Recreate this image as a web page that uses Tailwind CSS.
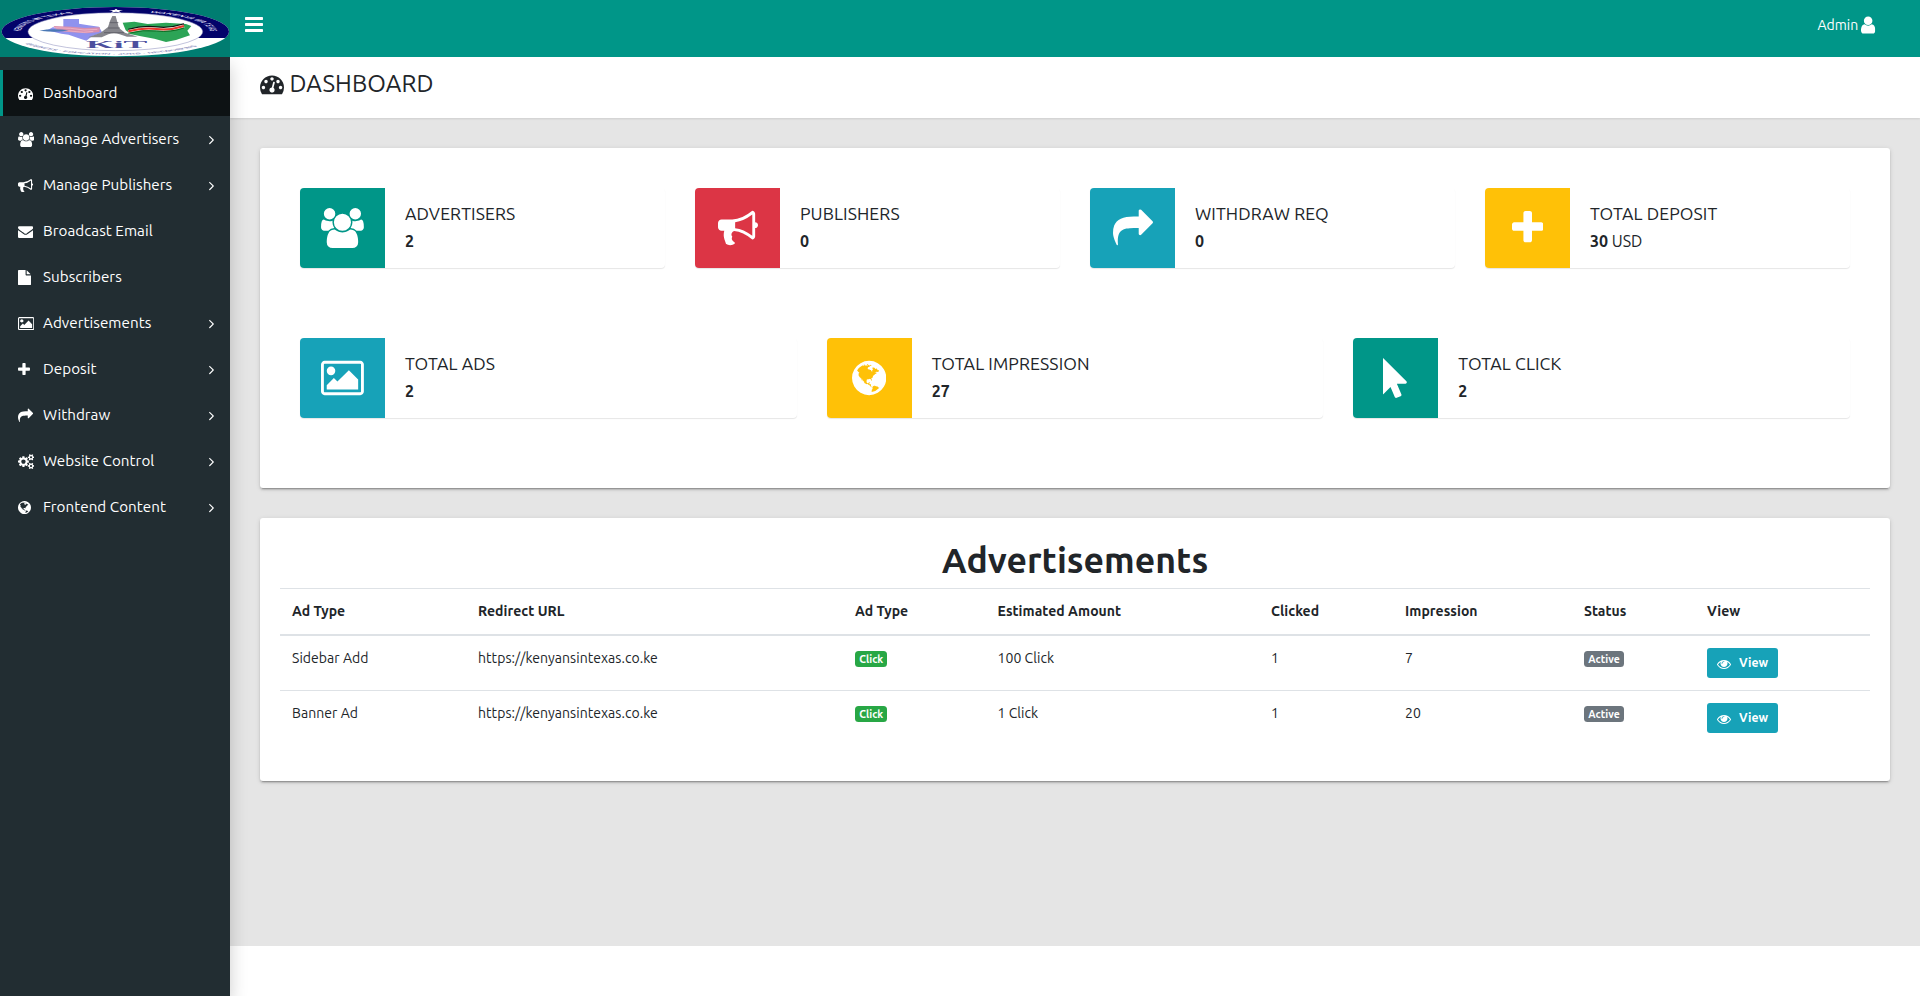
<!DOCTYPE html>
<html lang="en">
<head>
<meta charset="utf-8">
<title>Dashboard</title>
<script src="https://cdn.jsdelivr.net/npm/@tailwindcss/browser@4"></script>
</head>
<body class="h-[996px] overflow-hidden bg-white font-[Ubuntu,'Noto_Sans',sans-serif] text-sm leading-[21px] text-[#212529]">

<svg class="hidden">
  <symbol id="bars" viewBox="128 0 1536 1792"><path d="M1664 1344v128q0 26-19 45t-45 19h-1408q-26 0-45-19t-19-45v-128q0-26 19-45t45-19h1408q26 0 45 19t19 45zm0-512v128q0 26-19 45t-45 19h-1408q-26 0-45-19t-19-45v-128q0-26 19-45t45-19h1408q26 0 45 19t19 45zm0-512v128q0 26-19 45t-45 19h-1408q-26 0-45-19t-19-45v-128q0-26 19-45t45-19h1408q26 0 45 19t19 45z"/></symbol>
  <symbol id="user" viewBox="256 0 1280 1792"><path d="M1536 1399q0 109-62.500 187t-150.500 78h-854q-88 0-150.500-78t-62.500-187q0-85 8.500-160.500t31.500-152 58.500-131 94-89 134.500-34.500q131 128 313 128t313-128q76 0 134.500 34.500t94 89 58.500 131 31.500 152 8.500 160.500zm-256-887q0 159-112.500 271.500t-271.500 112.500-271.500-112.500-112.500-271.500 112.500-271.500 271.500-112.500 271.500 112.500 112.500 271.500z"/></symbol>
  <symbol id="dash" viewBox="0 0 1792 1792"><path d="M384 1152q0-53-37.500-90.500t-90.500-37.500-90.500 37.500-37.500 90.500 37.500 90.500 90.500 37.500 90.500-37.500 37.500-90.500zm192-448q0-53-37.500-90.500t-90.500-37.500-90.500 37.500-37.500 90.500 37.500 90.500 90.500 37.500 90.500-37.500 37.500-90.500zm428 481l101-382q6-26-7.500-48.500t-38.500-29.500-48 6.500-30 39.500l-101 382q-60 5-107 43.500t-63 98.500q-20 77 20 146t117 89 146-20 89-117q16-60-6-117t-72-91zm660-33q0-53-37.500-90.500t-90.500-37.500-90.500 37.500-37.500 90.500 37.500 90.500 90.500 37.500 90.500-37.500 37.500-90.500zm-640-640q0-53-37.500-90.500t-90.500-37.500-90.500 37.500-37.500 90.500 37.500 90.500 90.500 37.500 90.500-37.500 37.500-90.500zm448 192q0-53-37.500-90.500t-90.500-37.500-90.500 37.500-37.500 90.500 37.500 90.500 90.500 37.500 90.500-37.500 37.500-90.500zm320 448q0 261-141 483-19 29-54 29h-1402q-35 0-54-29-141-221-141-483 0-182 71-348t191-286 286-191 348-71 348 71 286 191 191 286 71 348z"/></symbol>
  <symbol id="users" viewBox="-64 0 1920 1792"><path transform="translate(-64 0)" d="M593 896q-162 5-265 128h-134q-82 0-138-40.500t-56-118.500q0-353 124-353 6 0 43.500 21t97.500 42.500 119 21.500q67 0 133-23-5 37-5 66 0 139 81 256zm1071 637q0 120-73 189.500t-194 69.500h-874q-121 0-194-69.500t-73-189.500q0-53 3.500-103.500t14-109 26.500-108.500 43-97.500 62-81 85.500-53.500 111.500-20q10 0 43 21.500t73 48 107 48 135 21.500 135-21.500 107-48 73-48 43-21.500q61 0 111.500 20t85.500 53.500 62 81 43 97.500 26.500 108.500 14 109 3.500 103.500zm-1024-1277q0 106-75 181t-181 75-181-75-75-181 75-181 181-75 181 75 75 181zm704 384q0 159-112.500 271.500t-271.500 112.500-271.500-112.500-112.500-271.500 112.500-271.500 271.500-112.500 271.500 112.500 112.500 271.500zm576 225q0 78-56 118.500t-138 40.500h-134q-103-123-265-128 81-117 81-256 0-29-5-66 66 23 133 23 59 0 119-21.500t97.500-42.500 43.500-21q124 0 124 353zm-128-609q0 106-75 181t-181 75-181-75-75-181 75-181 181-75 181 75 75 181z"/></symbol>
  <symbol id="horn" viewBox="0 0 1792 1792"><path d="M1664 640q53 0 90.500 37.500t37.500 90.500-37.500 90.500-90.500 37.500v384q0 52-38 90t-90 38q-417-347-812-380-58 19-91 66t-31 100.500 40 92.500q-20 33-23 65.500t6 58 33.500 55 48 50 61.500 50.500q-29 58-111.500 83t-168.500 11.500-132-55.500q-7-23-29.500-87.500t-32-94.500-23-89-15-101 3.500-98.500 22-110.500h-122q-66 0-113-47t-47-113v-192q0-66 47-113t113-47h480q435 0 896-384 52 0 90 38t38 90v384zm-128 604v-954q-394 302-768 343v270q377 42 768 341z"/></symbol>
  <symbol id="mail" viewBox="0 0 1792 1792"><path d="M1792 710v794q0 66-47 113t-113 47h-1472q-66 0-113-47t-47-113v-794q44 49 101 87 362 246 497 345 57 42 92.500 65.500t94.500 48 110 24.500h2q51 0 110-24.500t94.500-48 92.500-65.500q170-123 498-345 57-39 100-87zm0-294q0 79-49 151t-122 123q-376 261-468 325-10 7-42.500 31t-54 38.500-52 32.500-57.500 27-50 9h-2q-23 0-50-9t-57.500-27-52-32.500-54-38.500-42.500-31q-91-64-262-182.500t-205-142.500q-62-42-117-115.500t-55-136.500q0-78 41.500-130t118.500-52h1472q65 0 112.500 47t47.500 113z"/></symbol>
  <symbol id="file" viewBox="128 0 1536 1792"><path d="M1152 512v-472q22 14 36 28l408 408q14 14 28 36h-472zm-128 32q0 40 28 68t68 28h544v1056q0 40-28 68t-68 28h-1344q-40 0-68-28t-28-68v-1600q0-40 28-68t68-28h800v544z"/></symbol>
  <symbol id="image" viewBox="-64 0 1920 1792"><path d="M576 576q0 80-56 136t-136 56-136-56-56-136 56-136 136-56 136 56 56 136zm1024 384v448h-1408v-192l320-320 160 160 512-512zm96-704h-1600q-13 0-22.500 9.500t-9.500 22.500v1216q0 13 9.500 22.500t22.500 9.500h1600q13 0 22.500-9.500t9.500-22.500v-1216q0-13-9.500-22.500t-22.500-9.500zm160 32v1216q0 66-47 113t-113 47h-1600q-66 0-113-47t-47-113v-1216q0-66 47-113t113-47h1600q66 0 113 47t47 113z"/></symbol>
  <symbol id="plus" viewBox="192 0 1408 1792"><path d="M1600 736v192q0 40-28 68t-68 28h-416v416q0 40-28 68t-68 28h-192q-40 0-68-28t-28-68v-416h-416q-40 0-68-28t-28-68v-192q0-40 28-68t68-28h416v-416q0-40 28-68t68-28h192q40 0 68 28t28 68v416h416q40 0 68 28t28 68z"/></symbol>
  <symbol id="share" viewBox="0 0 1792 1792"><path d="M1792 640q0 26-19 45l-512 512q-19 19-45 19t-45-19-19-45v-256h-224q-98 0-175.500 6t-154 21.500-133 42.500-105.500 69.500-80 101-48.500 138.500-17.500 181q0 55 5 123 0 6 2.500 23.500t2.500 26.500q0 15-8.500 25t-23.500 10q-16 0-28-17-7-9-13-22t-13.500-30-10.500-24q-127-285-127-451 0-199 53-333 162-403 875-403h224v-256q0-26 19-45t45-19 45 19l512 512q19 19 19 45z"/></symbol>
  <symbol id="cogs" viewBox="-64 0 1920 1792"><path d="M832 896q0-106-75-181t-181-75-181 75-75 181 75 181 181 75 181-75 75-181zm768 512q0-52-38-90t-90-38-90 38-38 90q0 53 37.500 90.500t90.500 37.500 90.500-37.500 37.500-90.500zm0-1024q0-52-38-90t-90-38-90 38-38 90q0 53 37.500 90.500t90.500 37.500 90.500-37.500 37.500-90.500zm-384 421v185q0 10-7 19.500t-16 10.500l-155 24q-11 35-32 76 34 48 90 115 7 11 7 20 0 12-7 19-23 30-82.500 89.500t-78.500 59.500q-11 0-21-7l-115-90q-37 19-77 31-11 108-23 155-7 24-30 24h-186q-11 0-20-7.500t-10-17.500l-23-153q-34-10-75-31l-118 89q-7 7-20 7-11 0-21-8-144-133-144-160 0-9 7-19 10-14 41-53t47-61q-23-44-35-82l-152-24q-10-1-17-9.500t-7-19.500v-185q0-10 7-19.500t16-10.500l155-24q11-35 32-76-34-48-90-115-7-11-7-20 0-12 7-20 22-30 82-89t79-59q11 0 21 7l115 90q34-18 77-32 11-108 23-154 7-24 30-24h186q11 0 20 7.500t10 17.500l23 153q34 10 75 31l118-89q8-7 20-7 11 0 21 8 144 133 144 160 0 8-7 19-12 16-42 54t-45 60q23 48 34 82l152 23q10 2 17 10.500t7 19.500zm640 533v140q0 16-149 31-12 27-30 52 51 113 51 138 0 4-4 7-122 71-124 71-8 0-46-47t-52-68q-20 2-30 2t-30-2q-14 21-52 68t-46 47q-2 0-124-71-4-3-4-7 0-25 51-138-18-25-30-52-149-15-149-31v-140q0-16 149-31 13-29 30-52-51-113-51-138 0-4 4-7 4-2 35-20t59-34 30-16q8 0 46 46.500t52 67.500q20-2 30-2t30 2q51-71 92-112l6-2q4 0 124 70 4 3 4 7 0 25-51 138 17 23 30 52 149 15 149 31zm0-1024v140q0 16-149 31-12 27-30 52 51 113 51 138 0 4-4 7-122 71-124 71-8 0-46-47t-52-68q-20 2-30 2t-30-2q-14 21-52 68t-46 47q-2 0-124-71-4-3-4-7 0-25 51-138-18-25-30-52-149-15-149-31v-140q0-16 149-31 13-29 30-52-51-113-51-138 0-4 4-7 4-2 35-20t59-34 30-16q8 0 46 46.500t52 67.500q20-2 30-2t30 2q51-71 92-112l6-2q4 0 124 70 4 3 4 7 0 25-51 138 17 23 30 52 149 15 149 31z"/></symbol>
  <symbol id="globe" viewBox="128 0 1536 1792"><path d="M896 128q209 0 385.500 103t279.500 279.500 103 385.500-103 385.500-279.500 279.500-385.500 103-385.500-103-279.500-279.500-103-385.500 103-385.500 279.500-279.500 385.500-103zm274 521q-2 1-9.500 9.500t-13.500 9.500q2 0 4.500-5t5-11 3.500-7q6-7 22-15 14-6 52-12 34-8 51 11-2-2 9.500-13t14.500-12q3-2 15-4.500t15-7.500l2-22q-12 1-17.500-7t-6.500-21q0 2-6 8 0-7-4.500-8t-11.500 1-9 1q-10-3-15-7.500t-8-16.500-4-15q-2-5-9.500-11t-9.500-10q-1-2-2.500-5.500t-3-6.500-4-5.500-5.500-2.500-7 5-7.500 10-4.500 5q-3-2-6-1.500t-4.500 1-4.500 3-5 3.500q-3 2-8.500 3t-8.500 2q15-5-1-11-10-4-16-3 9-4 7.500-12t-8.500-14h5q-1-4-8.500-8.500t-17.500-8.500-13-6q-8-5-34-9.500t-33-.500q-5 6-4.500 10.500t4 14 3.500 12.500q1 6-5.500 13t-6.500 12q0 7 14 15.500t10 21.500q-3 8-16 16t-16 12q-5 8-1.500 18.500t10.500 16.500q2 2 1.500 4t-3.500 4.500-5.500 4-6.500 3.500l-3 2q-11 5-20.500-6t-13.500-26q-7-25-16-30-23-8-29 1-5-13-41-26-25-9-58-4 6-1 0-15-7-15-19-12 3-6 4-17.500t1-13.500q3-13 12-23 1-1 7-8.500t9.500-13.500.500-6q35 4 50-11 5-5 11.500-17t10.500-17q9-6 14-5.500t14.500 5.500 14.500 5q14 1 15.500-11t-7.500-20q12 1 3-17-4-7-8-9-12-4-27 5-8 4 2 8-1-1-9.500 10.500t-16.500 17.500-16-5q-1-1-5.500-13.500t-9.500-13.500q-8 0-16 15 3-8-11-15t-24-8q19-12-8-27-7-4-20.500-5t-19.500 4q-5 7-5.500 11.500t5 8 10.500 5.500 11.500 4 8.500 3q14 10 8 14-2 1-8.500 3.500t-11.500 4.500-6 4q-3 4 0 14t-2 14q-5-5-9-17.500t-7-16.500q7 9-25 6l-10-1q-4 0-16 2t-20.500 1-13.500-8q-4-8 0-20 1-4 4-2-4-3-11-9.500t-10-8.500q-46 15-94 41 6 1 12-1 5-2 13-6.500t10-5.500q34-14 42-7l5-5q14 16 20 25-7-4-30-1-20 6-22 12 7 12 5 18-4-3-11.500-10t-14.500-11-15-5q-16 0-22 1-146 80-235 222 7 7 12 8 4 1 5 9t2.500 11 11.500-3q9 8 3 19 1-1 44 27 19 17 21 21 3 11-10 18-1-2-9-9t-9-4q-3 5 .500 18.500t10.500 12.500q-7 0-9.500 16t-2.500 35.500-1 23.500l2 1q-3 12 5.500 34.500t21.500 19.500q-13 3 20 43 6 8 8 9 3 2 12 7.500t15 10 10 10.500q4 5 10 22.500t14 23.500q-2 6 9.500 20t10.500 23q-1 0-2.500 1t-2.500 1q3 7 15.500 14t15.500 13q1 3 2 10t3 11 8 2q2-20-24-62-15-25-17-29-3-5-5.500-15.500t-4.500-14.500q2 0 6 1.500t8.500 3.500 7.500 4 2 3q-3 7 2 17.500t12 18.500 17 19 12 13q6 6 14 19.500t0 13.500q9 0 20 10.500t17 19.500q5 8 8 26t5 24q2 7 8.500 13.500t12.500 9.500l16 8 13 7q5 2 18.500 10.500t21.500 11.500q10 4 16 4t14.500-2.500 13.500-3.500q15-2 29 15t21 21q36 19 55 11-2 1 .500 7.500t8 15.500 9 14.500 5.500 8.500q5 6 18 15t18 15q6-4 7-9-3 8 7 20t18 10q14-3 14-32-31 15-49-18 0-1-2.500-5.500t-4-8.500-2.500-8.500 0-7.500 5-3q9 0 10-3.500t-2-12.500-4-13q-1-8-11-20t-12-15q-5 9-16 8t-16-9q0 1-1.500 5.500t-1.500 6.500q-13 0-15-1 1-3 2.500-17.500t3.500-22.500q1-4 5.500-12t7.500-14.500 4-12.500-4.500-9.500-17.500-2.500q-19 1-26 20-1 3-3 10.500t-5 11.500-9 7q-7 3-24 2t-24-5q-13-8-22.500-29t-9.500-37q0-10 2.500-26.500t3-25-5.500-24.500q3-2 9-9.500t10-10.500q2-1 4.500-1.500t4.500 0 4-1.500 3-6q-1-1-4-3-3-3-4-3 7 3 28.500-1.500t27.500 1.500q15 11 22-2 0-1-2.500-9.500t-.500-13.500q5 27 29 9 3 3 15.500 5t17.500 5q3 2 7 5.500t5.500 4.500 5-.500 8.500-6.500q10 14 12 24 11 40 19 44 7 3 11 2t4.500-9.500 0-14-1.500-12.500l-1-8v-18l-1-8q-15-3-18.500-12t1.500-18.500 15-18.500q1-1 8-3.500t15.500-6.500 12.500-8q21-19 15-35 7 0 11-9-1 0-5-3t-7.500-5-4.500-2q9-5 2-16 5-3 7.500-11t7.500-10q9 12 21 2 8-8 1-16 5-7 20.500-10.500t18.500-9.500q7 2 8-2t1-12 3-12q4-5 15-9t13-5l17-11q3-4 0-4 18 2 31-11 10-11-6-20 3-6-3-9.500t-15-5.500q3-1 11.500-.500t10.500-1.500q15-10-7-16-17-5-43 12zm-163 877q206-36 351-189-3-3-12.500-4.500t-12.500-3.500q-18-7-24-8 1-7-2.500-13t-8-9-12.500-8-11-7q-2-2-7-6t-7-5.500-7.500-4.500-8.500-2-10 1l-3 1q-3 1-5.500 2.500t-5.500 3-4 3 0 2.500q-21-17-36-22-5-1-11-5.500t-10.500-7-10-1.500-11.500 7q-5 5-6 15t-2 13q-7-5 0-17.500t2-18.500q-3-6-10.500-4.500t-12 4.500-11.500 8.500-9 6.500-8.500 5.500-8.500 7.500q-3 4-6 12t-5 11q-2-4-11.500-6.500t-9.500-5.500q2 10 4 35t5 38q7 31-12 48-27 25-29 40-4 22 12 26 0 7-8 20.500t-7 21.500q0 6 2 16z"/></symbol>
  <symbol id="pointer" viewBox="340 0 1152 1792"><path d="M1389 1043q31 30 14 69-17 40-59 40h-382l201 476q10 25 0 49t-34 35l-177 75q-25 10-49 0t-35-34l-191-452-312 312q-19 19-45 19-12 0-24-5-40-17-40-59v-1504q0-42 40-59 12-5 24-5 27 0 45 19z"/></symbol>
  <symbol id="eye" viewBox="0 0 1792 1792"><path d="M1664 960q-152-236-381-353 61 104 61 225 0 185-131.500 316.500t-316.500 131.500-316.500-131.500-131.500-316.500q0-121 61-225-229 117-381 353 133 205 333.500 326.500t434.500 121.500 434.500-121.500 333.500-326.500zm-720-384q0-20-14-34t-34-14q-125 0-214.500 89.500t-89.500 214.500q0 20 14 34t34 14 34-14 14-34q0-86 61-147t147-61q20 0 34-14t14-34zm848 384q0 34-20 69-140 230-376.500 368.500t-499.500 138.500-499.500-139-376.500-368q-20-35-20-69t20-69q140-229 376.500-368t499.500-139 499.500 139 376.500 368q20 35 20 69z"/></symbol>
  <symbol id="angle" viewBox="589 0 582 1792"><path d="M1171 960q0 13-10 23l-466 466q-10 10-23 10t-23-10l-50-50q-10-10-10-23t10-23l393-393-393-393q-10-10-10-23t10-23l50-50q10-10 23-10t23 10l466 466q10 10 10 23z"/></symbol>
</svg>

<div class="flex h-full flex-col">
  <header class="relative z-20 flex h-[57px] shrink-0 bg-[#009688] text-white">
    <a class="block w-[230px] bg-[#007d71]">
      <svg class="h-[57px] w-[230px]" viewBox="0 0 690 171">
        <defs>
          <clipPath id="top"><rect x="0" y="0" width="690" height="114"/></clipPath>
          <path id="arc" d="M-284 0A284 284 0 0 1 284 0"/>
          <path id="low" d="M-318 0A318 318 0 0 0 318 0"/>
        </defs>
        <ellipse cx="346" cy="95" rx="341" ry="74" fill="#fff"/>
        <ellipse cx="346" cy="95" rx="341" ry="74" fill="#03036a" clip-path="url(#top)"/>
        <ellipse cx="346" cy="95" rx="262" ry="57" fill="#fff" stroke="#8486b8" stroke-width="1.500"/>
        <path d="M190 57h47v14l28 5 32 4 10 18-30 10-18 14-25-8-28-10-22-3-42-10 16-9h32z" fill="#9092ee"/>
        <path d="M160 78l55 2 40 4 45-2-2 14-38 4-45-3-40-5z" fill="#d88fae"/>
        <path d="M162 83l50 2 40 5 40-2M165 90l45 3 40 4 30-3" stroke="#efb7c8" stroke-width="2.500" fill="none"/>
        <path d="M118 92q40-8 88-1-30 8-88 1z" fill="#4a78b5"/>
        <path d="M368 68l35-3 40 7 55-4 60 4 16 6-12 14 8 14-42 14-30 6-35-10-40-7-30-6-16-12z" fill="#2ca456"/>
        <path d="M385 88q45-12 85-7t82-9" stroke="#111" stroke-width="4" fill="none"/>
        <path d="M385 94q45-12 85-7t82-9" stroke="#f5efe8" stroke-width="9" fill="none"/>
        <path d="M385 94q45-12 85-7t82-9" stroke="#e8352b" stroke-width="6" fill="none"/>
        <path d="M385 100q45-12 85-7t82-9" stroke="#0d6b22" stroke-width="3" fill="none"/>
        <path d="M337 48h10l5 18 5 18 18 14 38 12h-32l-22-7q-17-6-34 0l-20 9h-41l38-14 22-17 6-18z" fill="#86868c"/>
        <path d="M329 68h26M324 84h36M312 98h60" stroke="#5c5c64" stroke-width="2.500"/>
        <path d="M348 26l5 4h16l-12 3 6 5-15-3-15 3 6-5-12-3h16z" fill="#fff"/>
        <text x="258" y="145" textLength="184" lengthAdjust="spacingAndGlyphs" font-family="Liberation Serif" font-size="31" font-weight="700" fill="#4c4f9e">KiT</text>
        <g transform="translate(346 95) scale(1 .217)" font-family="Liberation Sans" font-weight="700">
          <text font-size="32" fill="#d9d9ee"><textPath href="#arc" startOffset="8">KENYANS IN TEXAS</textPath></text>
          <text font-size="32" fill="#d9d9ee"><textPath href="#arc" startOffset="550">WAKENYA WA TEXAS</textPath></text>
          <text font-size="26" fill="#8587b8"><textPath href="#low" startOffset="175">BUSINESS · EDUCATION · JOBS · NETWORKING</textPath></text>
        </g>
      </svg>
    </a>
    <div class="flex flex-1 items-start justify-between pl-[15px] pr-[44.500px]">
      <svg class="mt-[14px] h-[21px] w-[18px] fill-white"><use href="#bars"/></svg>
      <div class="flex pt-[15px]">
        <span>Admin</span>
        <svg class="ml-[3px] h-5 w-[14.300px] fill-white"><use href="#user"/></svg>
      </div>
    </div>
  </header>

  <div class="flex min-h-0 flex-1">
    <aside class="relative z-10 w-[230px] shrink-0 bg-[#222d32] pt-[13px] text-[15.200px] tracking-[0.050px] text-white shadow-[0_8px_17px_rgba(0,0,0,0.2)]">
      <nav id="nav"></nav>
    </aside>

    <div class="flex-1">
      <main class="h-[889px] bg-[#e5e5e5]">
        <div class="flex h-[61px] items-start bg-white pl-[30px] pt-[13px] shadow-[0_1px_2px_rgba(0,0,0,0.1)]">
          <svg class="mt-[1.500px] size-6 fill-[#212529]"><use href="#dash"/></svg>
          <h1 class="ml-[5.500px] -mt-[1px] text-2xl leading-[29px] tracking-[0.100px]">DASHBOARD</h1>
        </div>

        <section class="mx-[30px] mt-[30px] h-[340px] rounded-[3px] bg-white p-10 shadow-[0_2px_2px_0_rgba(0,0,0,0.14),0_3px_1px_-2px_rgba(0,0,0,0.2),0_1px_5px_0_rgba(0,0,0,0.12)]">
          <div id="row1" class="grid grid-cols-4 gap-[30px]"></div>
          <div id="row2" class="mt-[70px] grid grid-cols-3 gap-[30px]"></div>
        </section>

        <section class="mx-[30px] mt-[30px] h-[263px] rounded-[3px] bg-white p-5 shadow-[0_2px_2px_0_rgba(0,0,0,0.14),0_3px_1px_-2px_rgba(0,0,0,0.2),0_1px_5px_0_rgba(0,0,0,0.12)]">
          <h2 class="h-[50px] pt-px text-center text-[35.600px] leading-[42px] font-bold">Advertisements</h2>
          <table class="w-[1590px] table-fixed border-separate border-spacing-0 text-left tracking-[0.050px]">
            <colgroup><col class="w-[186px]"><col class="w-[377px]"><col class="w-[142.500px]"><col class="w-[273.500px]"><col class="w-[134px]"><col class="w-[179px]"><col class="w-[123px]"><col></colgroup>
            <thead><tr id="head"></tr></thead>
            <tbody id="body"></tbody>
          </table>
        </section>
      </main>
    </div>
  </div>
</div>

<script>
const nav = [['dash','Dashboard',0,'w-[15.2px]'],['users','Manage Advertisers',1,'w-[16.3px]'],['horn','Manage Publishers',1,'w-[15.2px]'],['mail','Broadcast Email',0,'w-[15.2px]'],['file','Subscribers',0,'w-[13px]'],['image','Advertisements',1,'w-[16.3px]'],['plus','Deposit',1,'w-[12px]'],['share','Withdraw',1,'w-[15.2px]'],['cogs','Website Control',1,'w-[16.3px]'],['globe','Frontend Content',1,'w-[13px]']];
document.getElementById('nav').innerHTML = nav.map(([i,t,a,w],k) => `
  <a class="flex h-[46px] items-center border-l-[3px] pl-[15px] pr-[16px] ${k ? 'border-transparent' : 'border-[#009688] bg-[#0d1214]'}">
    <span class="w-[25px] shrink-0 pt-px"><svg class="h-[15.2px] ${w} fill-white"><use href="#${i}"/></svg></span>
    <span class="flex-1 pb-[2px]">${t}</span>
    ${a ? '<svg class="mt-px h-[15px] w-[5px] fill-white"><use href="#angle"/></svg>' : ''}
  </a>`).join('');

const widget = ([i,c,w,t,n,u]) => `
  <div class="flex h-20 rounded bg-white shadow-[0_1px_1px_rgba(0,0,0,0.1)]">
    <div class="flex w-[85px] shrink-0 items-center justify-center rounded-l ${c}"><svg class="h-10 ${w} fill-white"><use href="#${i}"/></svg></div>
    <div class="pl-5 pt-[15px]">
      <h4 class="text-[17.600px] leading-[21px] tracking-[0.100px]">${t}</h4>
      <p class="mt-[5px] text-base leading-6">${u ? `<b>${n}</b> ${u}` : `<b>${n}</b>`}</p>
    </div>
  </div>`;
document.getElementById('row1').innerHTML = [['users','bg-[#009688]','w-[42.9px]','ADVERTISERS','2'],['horn','bg-[#dc3545]','w-10','PUBLISHERS','0'],['share','bg-[#17a2b8]','w-10','WITHDRAW REQ','0'],['plus','bg-[#ffc107]','w-[31.4px]','TOTAL DEPOSIT','30','USD']].map(widget).join('');
document.getElementById('row2').innerHTML = [['image','bg-[#17a2b8]','w-[42.9px]','TOTAL ADS','2'],['globe','bg-[#ffc107]','w-[34.3px]','TOTAL IMPRESSION','27'],['pointer','bg-[#009688]','w-[25.7px]','TOTAL CLICK','2']].map(widget).join('');

document.getElementById('head').innerHTML = ['Ad Type','Redirect URL','Ad Type','Estimated Amount','Clicked','Impression','Status','View'].map(t => `<th class="h-12 border-t border-b-2 border-[#dee2e6] px-3 pb-3 pt-3 align-top font-bold">${t}</th>`).join('');
const badge = (t,c) => `<span class="mt-[3px] block h-4 w-fit rounded-[3.5px] px-[4.2px] text-[10.5px] leading-4 font-bold text-white ${c}">${t}</span>`;
const view = '<a class="flex h-[30px] w-[71px] rounded-[3px] bg-[#17a2b8] pl-[10px] text-[12.25px] leading-[29px] font-bold text-white"><svg class="mr-2 mt-[9px] size-[14px] shrink-0 fill-white"><use href="#eye"/></svg>View</a>';
document.getElementById('body').innerHTML = [['Sidebar Add','100 Click','7'],['Banner Ad','1 Click','20']].map(([a,b,n],k) =>
  `<tr>${[a,'https://kenyansintexas.co.ke',badge('Click','bg-[#28a745]'),b,'1',n,badge('Active','bg-[#6c757d]'),view].map(x => `<td class="px-3 pb-3 pt-3 align-top ${k ? 'border-t border-[#dee2e6]' : ''}">${x}</td>`).join('')}</tr>`).join('');
</script>
</body>
</html>
